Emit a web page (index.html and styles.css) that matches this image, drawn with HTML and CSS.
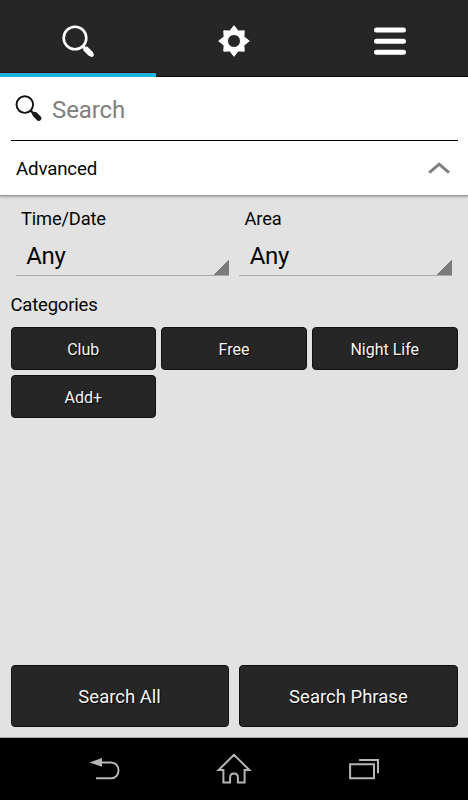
FILE: index.html
```html
<!DOCTYPE html>
<html lang="en">
<head>
<meta charset="utf-8">
<title>Search</title>
<link rel="stylesheet" href="styles.css">
</head>
<body>
<div class="screen">
  <nav class="tabs">
    <div class="tab tab-active">
      <svg width="36" height="36" viewBox="0 0 36 36"><circle cx="15" cy="15" r="11.3" fill="none" stroke="#fff" stroke-width="2.6"/><path d="M22.5 23L25 25.5" stroke="#fff" stroke-width="3.4"/><path d="M25 25.2L31.2 31.2" stroke="#fff" stroke-width="5.6"/><path d="M31 31l.7.7" stroke="#fff" stroke-width="4.4" stroke-linecap="round"/></svg>
    </div>
    <div class="tab">
      <svg width="36" height="36" viewBox="-18 -18 36 36"><path fill="#fff" fill-rule="evenodd" stroke="#fff" stroke-linejoin="round" d="M0-15.3L4.2-9.9 10.2-10.2 9.9-4.2 15.3 0 9.9 4.2 10.2 10.2 4.2 9.9 0 15.3-4.2 9.9-10.2 10.2-9.9 4.2-15.3 0-9.9-4.2-10.2-10.2-4.2-9.9ZM6.5 0A6.5 6.5 0 1 0-6.5 0 6.5 6.5 0 1 0 6.5 0Z"/></svg>
    </div>
    <div class="tab">
      <svg width="36" height="36" viewBox="0 0 36 36"><path d="M4.5 7H31.5M4.5 18.2H31.5M4.5 29.3H31.5" stroke="#fff" stroke-width="5" stroke-linecap="round"/></svg>
    </div>
  </nav>
  <section class="panel">
    <div class="field">
      <svg width="30" height="30" viewBox="0 0 30 30"><circle cx="10.8" cy="10.6" r="8.3" fill="none" stroke="#111" stroke-width="1.9"/><path d="M16.5 16.5L20.5 20.5" stroke="#111" stroke-width="2.4"/><path d="M20.9 20.4L24.9 24.3" stroke="#181818" stroke-width="5.2" stroke-linecap="round"/></svg>
      <span class="placeholder">Search</span>
    </div>
    <div class="advanced">
      <span class="advanced-label">Advanced</span>
      <svg width="22" height="14" viewBox="0 0 22 14"><path d="M1.2 11.7L11.2 3.2 21 11.7" fill="none" stroke="#808080" stroke-width="3"/></svg>
    </div>
  </section>
  <main class="content">
    <div class="filters">
      <div class="filter"><div class="label">Time/Date</div><div class="spinner">Any</div></div>
      <div class="filter"><div class="label">Area</div><div class="spinner">Any</div></div>
    </div>
    <div class="heading">Categories</div>
    <div class="chips">
      <div class="button">Club</div><div class="button">Free</div><div class="button">Night Life</div><div class="button">Add+</div>
    </div>
    <div class="actions"><div class="button">Search All</div><div class="button">Search Phrase</div></div>
  </main>
  <footer class="system">
    <svg width="32" height="32" viewBox="0 0 32 32"><path d="M12 9.5H23C33 9.5 33 25.3 23 25.3H8" fill="none" stroke="#b5b5b5" stroke-width="2"/><path d="M1.5 9.5L14 5V13.8Z" fill="#b5b5b5"/></svg>
    <svg width="36" height="36" viewBox="0 0 36 36"><path d="M18 3.8L2.6 19H7.4V31.6H14.1V26.5C14.1 21 21.9 21 21.9 26.5V31.6H28.6V19H33.4Z" fill="none" stroke="#b5b5b5" stroke-width="2"/></svg>
    <svg width="32" height="32" viewBox="0 0 32 32"><path d="M2.1 11.2H26V25.2H2.1ZM11.1 7.1H30V20.2" fill="none" stroke="#b5b5b5" stroke-width="2"/></svg>
  </footer>
</div>
</body>
</html>
```
FILE: styles.css
```css
* { box-sizing: border-box; }
body { margin: 0; font-family: Roboto, sans-serif; color: #050505; }
svg { display: block; flex: none; }
.screen { width: 468px; height: 800px; display: flex; flex-direction: column; background: #e2e2e2; }
.tabs { height: 77px; flex: none; display: grid; grid-template-columns: repeat(3, 1fr); background: #262626; border-bottom: 1px solid #000; }
.tab { display: flex; justify-content: center; padding-top: 22.5px; height: 77px; }
.tab-active { border-bottom: 4px solid #16b5e0; box-shadow: inset 0 -1px #3b0a08; }
.panel { height: 118px; flex: none; background: #fff; box-shadow: 0 1px 1px #999, 0 2px 3px #aaa; position: relative; }
.field { height: 64px; margin: 0 10.5px; padding-left: 3.5px; display: flex; align-items: center; border-bottom: 1px solid #000; }
.placeholder { margin-left: 8px; padding-top: 3px; font-size: 24px; line-height: 28px; letter-spacing: -0.1px; color: #808080; }
.advanced { height: 54px; padding: 0 18px 0 16px; display: flex; align-items: center; justify-content: space-between; font-size: 18.67px; letter-spacing: -0.15px; }
.advanced-label { padding-top: 2px; }
.content { flex: 1; padding: 12px 10.5px 10px; display: flex; flex-direction: column; border-bottom: 1px solid #aaa; }
.filters { display: grid; grid-template-columns: 213px 213px; gap: 10.5px; padding-left: 5.2px; }
.label { padding-left: 5.3px; font-size: 18.3px; letter-spacing: -0.15px; line-height: 24px; }
.spinner { height: 45px; padding: 7px 0 0 10.5px; font-size: 24px; line-height: 36px; letter-spacing: -0.3px; border-bottom: 1px solid #aaa; background: linear-gradient(135deg, transparent 50%, #7b7b7b 50%) right bottom / 16px 16px no-repeat; background-origin: border-box; background-clip: border-box; }
.heading { margin-top: 17px; font-size: 18.5px; letter-spacing: -0.2px; line-height: 24px; }
.chips { margin-top: 9.5px; display: grid; grid-template-columns: repeat(3, 1fr); gap: 5.3px; }
.button { height: 43px; padding-top: 2px; display: flex; align-items: center; justify-content: center; background: #262626; border: 1px solid #101010; border-radius: 4px; color: #f5f5f5; font-size: 16px; text-shadow: 1px 1px 1px #000; }
.actions { margin-top: auto; display: grid; grid-template-columns: 1fr 1fr; gap: 10.6px; }
.actions .button { height: 62px; padding-top: 2px; font-size: 18.5px; }
.system { height: 62px; flex: none; display: flex; align-items: center; justify-content: center; gap: 96px; background: #000; }
```
